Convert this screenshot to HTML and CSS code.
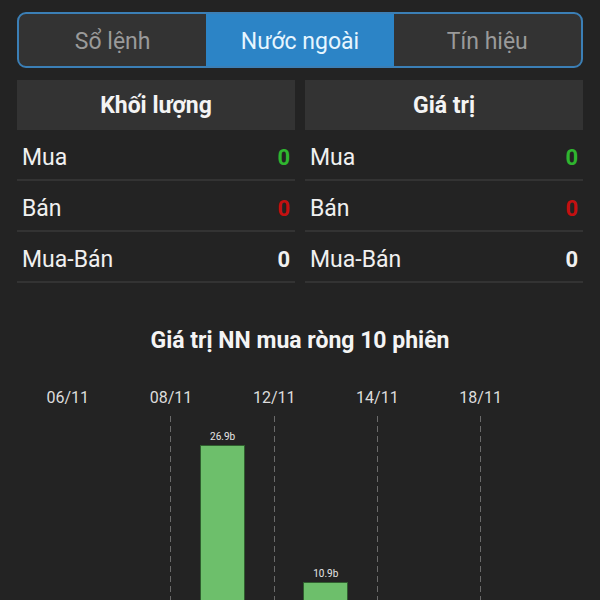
FILE: index.html
```html
<!DOCTYPE html>
<html lang="vi">
<head>
  <meta charset="UTF-8">
  <title>Nước ngoài</title>
  <link rel="stylesheet" href="styles.css">
</head>
<body>
  <div class="page">
    <div class="tabs">
      <div class="tab">Sổ lệnh</div>
      <div class="tab active">Nước ngoài</div>
      <div class="tab">Tín hiệu</div>
    </div>

    <div class="panels">
      <div class="panel">
        <div class="panel-head">Khối lượng</div>
        <div class="row"><span>Mua</span><span class="val up">0</span></div>
        <div class="row"><span>Bán</span><span class="val down">0</span></div>
        <div class="row"><span>Mua-Bán</span><span class="val">0</span></div>
      </div>
      <div class="panel">
        <div class="panel-head">Giá trị</div>
        <div class="row"><span>Mua</span><span class="val up">0</span></div>
        <div class="row"><span>Bán</span><span class="val down">0</span></div>
        <div class="row"><span>Mua-Bán</span><span class="val">0</span></div>
      </div>
    </div>

    <div class="chart">
      <h2 class="chart-title">Giá trị NN mua ròng 10 phiên</h2>
      <div class="plot">
        <div class="col"><div class="date">06/11</div><div class="area"></div></div>
        <div class="col"><div class="date"></div><div class="area"></div></div>
        <div class="col"><div class="date">08/11</div><div class="area grid"></div></div>
        <div class="col"><div class="date"></div><div class="area">
          <div class="bar-wrap"><span class="bar-label">26.9b</span><div class="bar" style="height: 230px"></div></div>
        </div></div>
        <div class="col"><div class="date">12/11</div><div class="area grid"></div></div>
        <div class="col"><div class="date"></div><div class="area">
          <div class="bar-wrap"><span class="bar-label">10.9b</span><div class="bar" style="height: 93px"></div></div>
        </div></div>
        <div class="col"><div class="date">14/11</div><div class="area grid"></div></div>
        <div class="col"><div class="date"></div><div class="area"></div></div>
        <div class="col"><div class="date">18/11</div><div class="area grid"></div></div>
        <div class="col"><div class="date"></div><div class="area"></div></div>
      </div>
    </div>
  </div>
</body>
</html>
```

FILE: styles.css
```css
html, body {
  margin: 0;
  padding: 0;
  background: #232323;
  height: 100%;
  overflow: hidden;
  font-family: Roboto, "Liberation Sans", sans-serif;
  color: #f0f0f0;
}

.page {
  padding: 12px 17px 0;
}

.tabs {
  display: flex;
  height: 52px;
  border: 2px solid #3b7fb6;
  border-radius: 9px;
  overflow: hidden;
  background: #333333;
}

.tab {
  flex: 1;
  display: flex;
  align-items: center;
  justify-content: center;
  padding-top: 2px;
  font-size: 23px;
  color: #9a9a9a;
}

.tab.active {
  background: #2c84c6;
  color: #e6f6ff;
}

.panels {
  display: flex;
  gap: 10px;
  margin-top: 12px;
}

.panel {
  flex: 1;
}

.panel-head {
  height: 50px;
  display: flex;
  align-items: center;
  justify-content: center;
  background: #333333;
  font-size: 23px;
  font-weight: bold;
  color: #f4f4f4;
}

.row {
  height: 43px;
  padding: 6px 5px 0;
  display: flex;
  align-items: center;
  justify-content: space-between;
  border-bottom: 2px solid #333333;
  font-size: 23px;
}

.val {
  font-weight: bold;
  font-size: 22px;
}

.val.up {
  color: #2fb52f;
}

.val.down {
  color: #c41010;
}

.chart-title {
  margin: 44px 0 0;
  text-align: center;
  font-size: 23px;
  font-weight: bold;
  color: #f4f4f4;
}

.plot {
  display: grid;
  grid-template-columns: repeat(10, 1fr);
  margin: 34px 25px 0 25px;
}

.col {
  display: flex;
  flex-direction: column;
  align-items: center;
}

.date {
  height: 20px;
  font-size: 16px;
  color: #dddddd;
  white-space: nowrap;
}

.area {
  margin-top: 8px;
  height: 259px;
  width: 100%;
  display: flex;
  justify-content: center;
  align-items: flex-end;
}

.area.grid {
  background: repeating-linear-gradient(to bottom, #6a6a6a 0 6px, transparent 6px 10px) center / 1px 100% no-repeat;
}

.bar-wrap {
  display: flex;
  flex-direction: column;
  align-items: center;
  width: 45px;
}

.bar-label {
  font-size: 10px;
  color: #e6e6e6;
  margin-bottom: 3px;
}

.bar {
  width: 100%;
  box-sizing: border-box;
  background: #6dbf6b;
  border: 1px solid #2f5e2e;
}
```
